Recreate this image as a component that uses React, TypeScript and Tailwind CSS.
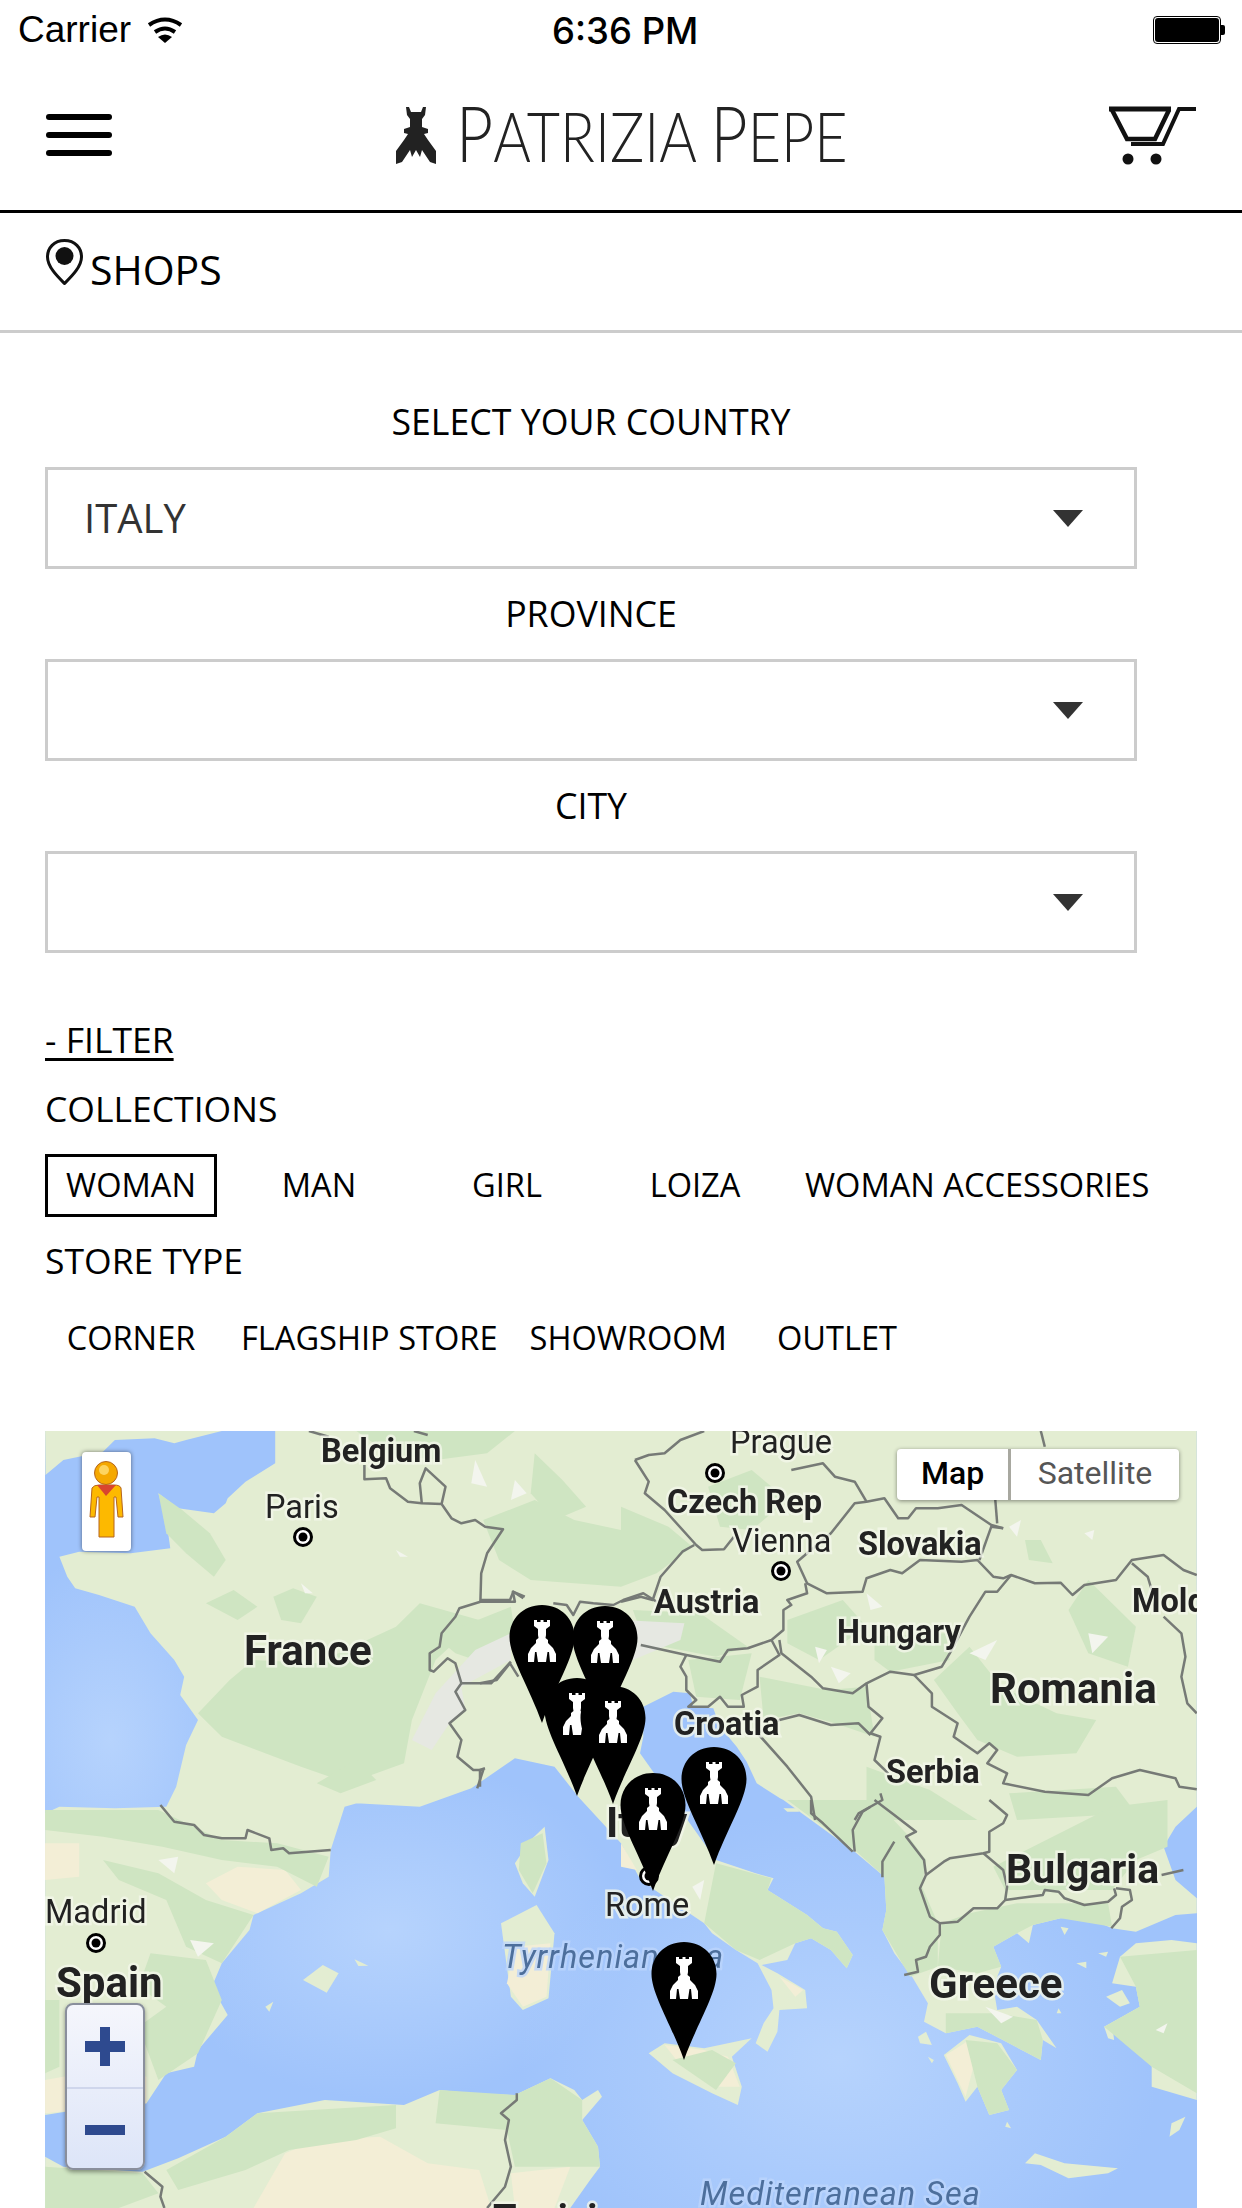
const toPage = (ox: number, oy: number, sx: number, pts: number[]) => {
  const out: string[] = [];
  for (let i = 0; i < pts.length; i += 2) {
    out.push(`${(ox + pts[i] / sx).toFixed(1)},${(oy + pts[i + 1] / 3).toFixed(1)}`);
  }
  return out.join(' ');
};

// traced from crops of the map, each crop has its own origin
const nw = (p: number[]) => toPage(0, 1420, 2.525, p);
const ne = (p: number[]) => toPage(621, 1420, 2.525, p);
const sw = (p: number[]) => toPage(0, 1800, 2.525, p);
const se = (p: number[]) => toPage(621, 1800, 2.525, p);
const alps = (p: number[]) => toPage(480, 1580, 3, p);

const mainland = [
  nw([695,33,695,130,620,185,575,235,570,250,540,280,450,265,400,220,420,300,430,385,330,400,200,395,150,410,170,470,190,505,250,525,340,560,380,640,440,720,465,770,455,825,500,900,470,975,445,1100,420,1160,290,1165,150,1160,114,1180]),
  sw([114,945,165,935,370,910,420,820,490,800,500,750,575,645,535,560,560,490,630,390,640,345,760,280,830,230,835,150,870,20,930,0]),
  nw([900,1150,1060,1160,1190,1105,1300,1015,1400,1040,1460,1130]),
  se([0,130,45,230,85,270,210,370,230,400,290,450,345,490,380,570,385,625,360,670,340,730,370,755,395,695,400,630,470,625,465,570,395,520,355,495,420,480,440,430,480,415,530,450,570,505,585,465,545,395,510,385,470,345,370,270,385,235,340,220,240,180]),
  alps([480,520,490,470,490,380,580,335,630,340,640,380,700,385,720,440,770,500,800,545,830,610,900,655]),
  se([410,0,480,60,590,155,665,230,670,330,660,390,690,460,735,530,775,610,765,665,820,700,900,680,1060,780,1065,720,1100,745,1050,660,1000,620,950,630,940,560,960,500,940,440,1000,400,1030,430,1040,375,1110,355,1170,350,1240,385,1300,395,1400,345,1454,340,1454,295,1400,240,1370,140,1400,80,1454,20]),
  ne([1454,33]),
].join(' ');

const land = [
  nw([114,33,560,33,470,60,440,70,390,55,290,60,260,95,160,120,115,165]),
  sw([114,1070,160,1100,360,1115,450,1075,570,1010,650,940,820,900,1020,915,1110,870,1190,880,1300,885,1390,835,1450,870,1470,900,1510,870,1520,890,1470,960,1510,1040,1515,1100,1490,1140,1440,1224,114,1224]),
  sw([1375,80,1385,180,1350,290,1320,250,1300,190,1340,120]),
  sw([1355,315,1400,400,1385,595,1320,630,1290,590,1265,370]),
  sw([815,495,855,520,825,578,765,540]),
  sw([895,478,930,497,905,498]),
  sw([690,605,680,635,670,620]),
  se([70,760,110,730,210,745,330,715,280,770,305,860,295,915,230,880,130,820]),
  se([880,705,960,730,1000,810,960,870,980,930,930,945,900,860,870,905,850,850,815,765]),
  se([1454,430,1390,420,1300,430,1260,470,1240,550,1300,560,1310,620,1220,680,1340,790,1340,860,1454,900]),
  se([1020,1090,1045,1060,1120,1090,1255,1105,1230,1120,1130,1135,1060,1095]),
  se([750,710,770,695,785,735,755,730]),
  se([775,770,790,780,785,790]),
  se([1220,680,1240,670,1245,720,1230,715]),
  se([1385,1010,1390,970,1425,950,1410,990]),
  se([1225,590,1265,570,1285,610,1260,620]),
  se([1105,625,1112,640,1100,640]),
  se([1150,490,1175,485,1175,505]),
  se([1205,460,1230,455,1225,470]),
  se([975,965,985,985,970,980]),
  se([1110,380,1130,385,1120,405]),
  se([410,25,445,25,450,35,420,35]),
];

const green = [
  nw([400,220,460,270,530,340,570,420,540,470,470,400,420,340]),
  nw([520,550,590,510,650,560,600,600]),
  nw([690,530,740,505,800,530,760,610,710,600]),
  nw([580,780,640,720,800,730,1000,620,1060,550,1210,600,1100,720,1040,900,1020,1030,880,1090,760,1040,560,950,500,880]),
  nw([800,1090,900,1020,950,1080,860,1120]),
  nw([1220,300,1350,240,1450,300,1568,330,1568,500,1340,480,1260,420]),
  nw([1350,100,1420,180,1480,260,1400,300,1340,220]),
  nw([900,33,1300,33,1230,100,1100,120,980,100]),
  nw([1100,650,1290,560,1300,640,1200,720,1150,700]),
  ne([0,260,120,320,180,380,90,460,0,500]),
  ne([220,200,330,150,420,240,330,330,250,320]),
  ne([30,570,200,580,320,680,240,710,60,670]),
  ne([170,720,330,700,300,840,190,830]),
  ne([350,770,520,810,620,800,640,950,540,910,450,880,360,900]),
  ne([640,650,820,640,830,720,680,755,640,720]),
  ne([420,600,560,540,620,620,500,720,420,670]),
  ne([790,780,880,680,960,800,1100,880,1200,900,1150,1000,1000,1010,900,960,850,880]),
  ne([1020,360,1060,360,1090,430,1030,420]),
  ne([980,1120,1250,1100,1300,1180,1000,1200]),
  ne([1180,480,1300,620,1280,740,1180,700,1130,570]),
  ne([620,1040,780,1110,900,1200,620,1200]),
  sw([114,30,400,30,560,120,700,130,830,170,800,260,700,200,560,180,410,140,260,110,114,90]),
  sw([260,180,400,220,520,300,640,345,560,490,470,440,420,300,300,240]),
  sw([380,460,520,480,560,600,500,760,400,840,350,680,420,620,350,560]),
  sw([114,600,150,600,150,800,114,820]),
  sw([1315,130,1370,100,1380,190,1345,280,1310,210]),
  sw([570,1010,650,940,1000,915,1000,985,900,1020,730,1050,620,1110,450,1170,420,1110]),
  sw([1110,870,1300,885,1390,835,1470,900,1470,960,1510,1040,1515,1100,1300,1100,1280,990,1100,970]),
  sw([114,1100,360,1120,400,1180,300,1224,114,1224]),
  se([240,190,380,235,370,270,470,345,510,385,545,395,585,465,570,505,530,450,480,415,440,430,350,480,290,450,210,370]),
  se([420,0,590,150,665,230,670,330,660,390,730,530,800,500,800,370,760,260,770,180,720,100,640,0]),
  se([810,370,880,340,1000,310,1230,310,1240,380,1110,355,1040,375,1000,400,940,440,960,500,900,520,800,500]),
  se([940,200,1240,20,1380,0,1380,140,1300,180,1240,270,970,270]),
  se([870,720,950,730,1000,810,960,870,980,930,930,945,900,860]),
  se([820,640,950,640,1050,660,1065,720,1060,780,900,680,820,700]),
  se([1260,470,1454,450,1454,880,1340,800,1220,680,1310,620,1300,560]),
  se([130,780,230,750,290,790,240,870]),
];

const sand = [
  sw([640,1224,720,1060,800,1020,960,1010,1080,1090,1210,1110,1240,1224]),
  sw([1300,1224,1290,1120,1440,1100,1400,1224]),
  sw([600,200,720,210,760,270,650,340,560,300,520,250]),
  sw([114,840,300,800,370,830,370,910,114,940]),
  sw([114,130,200,130,200,230,114,240]),
  sw([420,640,500,630,510,730,440,760]),
  sw([1300,440,1390,430,1380,590,1320,620,1280,550]),
  se([110,735,210,750,270,770,300,860,230,860,140,780]),
  se([0,130,40,210,0,200]),
  se([255,300,310,320,290,350,260,340]),
  se([820,765,880,720,890,800,870,890]),
  se([470,360,510,385,490,410]),
  se([400,530,460,570,440,590]),
];

const snow = [
  nw([1040,960,1100,820,1200,690,1290,640,1290,720,1165,800,1175,870,1135,910,1090,990]),
  ne([0,600,160,610,150,660,30,720,0,760]),
];

const flecks = [
  ne([1180,640,1230,650,1190,700]),
  ne([880,700,950,660,920,720]),
  ne([490,680,520,690,500,730]),
  ne([620,520,660,560,630,570]),
  ne([530,740,580,760,550,790]),
  ne([980,320,1010,300,1000,350]),
  ne([1170,340,1195,330,1190,360]),
  nw([1200,120,1230,200,1190,190]),
  nw([1300,180,1330,220,1290,240]),
  nw([760,490,790,520,770,520]),
  nw([1000,390,1030,410,1010,410]),
  sw([400,180,450,170,440,220]),
  sw([480,420,540,430,500,470]),
  se([180,260,210,240,200,300]),
  se([920,620,990,650,960,670]),
  se([1350,690,1380,670,1370,700]),
];

const borders = [
  nw([780,33,830,50]),
  nw([1045,33,1080,45]),
  nw([920,135,920,178,975,175,985,205,1030,245,1065,250,1115,252,1140,295,1165,310,1200,300,1225,320,1270,328,1230,400,1215,460,1213,545,1300,545,1295,515,1325,530]),
  nw([1213,545,1160,565,1150,590,1115,640,1110,680,1085,700,1085,750,1095,755,1130,715,1150,730,1165,790,1240,790,1290,725]),
  nw([1165,790,1150,815,1175,870,1135,910,1165,960,1155,1010,1195,1050,1220,1050,1205,1105]),
  nw([1065,250,1060,190,1075,145,1125,200,1115,252]),
  sw([405,15,440,65,490,75,515,105,560,115,620,115,625,90,680,115,685,150,715,145,730,160,835,150]),
  sw([365,1115,410,1160,405,1190,415,1224]),
  sw([1305,880,1305,900,1265,940,1285,960,1275,1020,1290,1100,1275,1160,1240,1210,1230,1224]),
  ne([35,120,70,185,60,220,110,270,190,375,205,390,260,388,285,350]),
  ne([35,120,70,105,110,100,150,60,210,33]),
  ne([430,150,510,130,540,170,590,185,620,245,665,235,700,295,725,295,745,265,800,265,860,255,935,315,965,325]),
  ne([620,245,590,250,530,340,470,400,445,425,470,490,520,520,610,515,620,475,680,450,710,460,755,420,860,425,900,420,940,470,965,475,985,465]),
  ne([965,325,935,320,905,420]),
  ne([1060,33,1070,80]),
  ne([945,240,950,310]),
  ne([0,545,50,530,80,540,100,470,155,395,185,375]),
  ne([465,490,470,520,420,540,430,555,410,570,410,630,380,660,320,685,270,690,250,725,165,705,50,675]),
  ne([165,705,150,740,165,770,165,810,190,840,170,860,220,860,250,830,270,860,310,860,305,825,345,800,345,750,400,705,380,660]),
  ne([400,660,405,700,480,770,510,805,585,820,620,790,680,755,740,765,810,740,830,700,880,590,920,515,950,515,985,465,1045,490,1110,488,1140,525,1170,495,1250,480,1290,420,1370,405,1420,450,1454,465]),
  ne([1290,430,1330,470,1340,510]),
  ne([1370,590,1415,640,1425,710,1415,770,1430,850,1454,880]),
  ne([740,765,785,820,785,860,850,910,840,950,900,1000,930,970,950,990,925,1030,975,1060,965,1090,1070,1115,1180,1125,1240,1075,1310,1050,1400,1075,1410,1100,1454,1108]),
  ne([620,790,625,860,660,895,630,940,655,950,640,1020,675,1060]),
  ne([345,940,400,900,450,885,530,915,600,910,630,945]),
  ne([345,940,420,1040,480,1130,490,1200]),
  ne([655,1120,660,1140,600,1180,590,1200]),
  se([480,0,480,40,510,70,585,155]),
  se([590,155,585,90,610,35,630,20]),
  se([640,0,690,45,745,95,720,110,765,180,770,225,755,265,780,350,805,370,805,405,780,440,770,470,745,480,750,515,715,525]),
  se([930,0,975,45,965,70,930,95,930,155,915,160,830,175,815,185,770,225]),
  se([915,160,965,210,975,260,970,300,950,325,890,325,850,365,805,370]),
  se([970,300,1065,285,1070,270,1105,275,1120,295,1170,315,1230,305,1250,285,1245,265]),
  se([1250,265,1285,270,1290,300,1265,320,1260,355,1238,385]),
  se([1365,225,1420,210]),
  se([690,125,660,185,660,232]),
  alps([0,60,90,60,100,35,130,55]),
  alps([220,70,260,75,280,105,300,65,340,70,400,75,430,60,490,40,530,65]),
  alps([0,310,50,300,90,250,115,290]),
  alps([0,620,0,570,15,565]),
];

const places: { name: string; x: number; y: number; size?: number; bold?: boolean; sea?: boolean; spacing?: number }[] = [
  { name: 'Belgium', x: 321, y: 1462, bold: true },
  { name: 'Paris', x: 265, y: 1518 },
  { name: 'France', x: 244, y: 1665, size: 42, bold: true },
  { name: 'Prague', x: 730, y: 1453 },
  { name: 'Czech Rep', x: 667, y: 1513, bold: true },
  { name: 'Vienna', x: 732, y: 1552 },
  { name: 'Slovakia', x: 858, y: 1555, bold: true },
  { name: 'Austria', x: 654, y: 1613, bold: true },
  { name: 'Hungary', x: 837, y: 1643, bold: true },
  { name: 'Romania', x: 990, y: 1703, size: 42, bold: true },
  { name: 'Croatia', x: 674, y: 1735, bold: true },
  { name: 'Serbia', x: 886, y: 1783, bold: true },
  { name: 'Moldova', x: 1132, y: 1612, bold: true },
  { name: 'Madrid', x: 45, y: 1923 },
  { name: 'Spain', x: 56, y: 1997, size: 42, bold: true },
  { name: 'Italy', x: 606, y: 1837, size: 42, bold: true },
  { name: 'Rome', x: 605, y: 1916 },
  { name: 'Bulgaria', x: 1006, y: 1883, size: 41, bold: true },
  { name: 'Greece', x: 929, y: 1998, size: 42, bold: true },
  { name: 'Tunisia', x: 493, y: 2232, size: 38, bold: true },
  { name: 'Tyrrhenian Sea', x: 502, y: 1968, sea: true, spacing: 1 },
  { name: 'Mediterranean Sea', x: 700, y: 2205, sea: true, spacing: 1 },
];

const cities = [[303, 1537], [715, 1473], [781, 1571], [96, 1943], [649, 1876]];

// head centre x and top of each marker
const markers = [[542, 1605], [605, 1606], [577, 1678], [613, 1686], [714, 1747], [653, 1773], [684, 1942]];

function Marker({ x, y }: { x: number; y: number }) {
  return (
    <g transform={`translate(${x} ${y})`}>
      <path d="M0 0C-19 0 -32.500 14 -32.500 32C-32.500 52 -12 84 0 118C12 84 32.500 52 32.500 32C32.500 14 19 0 0 0Z" fill="#000" />
      <path
        d="M-8 15L-5 15L-5 17L-1.500 17L-1.500 15L1.500 15L1.500 17L5 17L5 15L8 15L8 21L4 24L4 30L3.500 33L6 35L6 38L11 43L14 49L14 57L8 57L7 47L5.500 47L4 57L-4 57L-5.500 47L-7 47L-8 57L-14 57L-14 49L-11 43L-6 38L-6 35L-3.500 33L-4 30L-4 24L-8 21Z"
        fill="#fff"
      />
    </g>
  );
}

function MapDrawing() {
  return (
    <svg viewBox="45 1431 1152 777" className="block w-full h-full blur-[0.6px]">
      <defs>
        <radialGradient id="sea">
          <stop offset="0%" stopColor="#b6d3fd" />
          <stop offset="100%" stopColor="#b6d3fd" stopOpacity="0" />
        </radialGradient>
      </defs>
      <rect x="45" y="1431" width="1152" height="777" fill="#9fc3fb" />
      <ellipse cx="110" cy="1740" rx="130" ry="190" fill="url(#sea)" />
      <ellipse cx="390" cy="1930" rx="240" ry="170" fill="url(#sea)" />
      <ellipse cx="840" cy="2060" rx="320" ry="250" fill="url(#sea)" />
      <polygon points={mainland} fill="#e3edd2" />
      {land.map((p) => (
        <polygon key={p} points={p} fill="#e3edd2" />
      ))}
      {sand.map((p) => (
        <polygon key={p} points={p} fill="#f3eed6" />
      ))}
      {green.map((p) => (
        <polygon key={p} points={p} fill="#cfe5c2" />
      ))}
      {snow.map((p) => (
        <polygon key={p} points={p} fill="#e6e8e2" />
      ))}
      {flecks.map((p) => (
        <polygon key={p} points={p} fill="#f3f5ee" />
      ))}
      {borders.map((p) => (
        <polyline key={p} points={p} fill="none" stroke="#767a76" strokeWidth="2.500" strokeLinejoin="round" />
      ))}
      {places.map((p) => (
        <text
          key={p.name}
          x={p.x}
          y={p.y}
          fontFamily="Roboto, sans-serif"
          fontSize={p.size ?? 32.500}
          fontWeight={p.bold ? 700 : 400}
          fontStyle={p.sea ? 'italic' : 'normal'}
          letterSpacing={p.spacing ?? 0}
          fill={p.sea ? '#4d6f9c' : '#222'}
          stroke={p.sea ? '#bcd5fb' : '#f2f6ea'}
          strokeOpacity="0.8"
          strokeWidth="5"
          paintOrder="stroke"
        >
          {p.name}
        </text>
      ))}
      {cities.map(([x, y]) => (
        <g key={x}>
          <circle cx={x} cy={y} r="8.500" fill="#fff" stroke="#000" strokeWidth="3" />
          <circle cx={x} cy={y} r="4.500" fill="#000" />
        </g>
      ))}
      {markers.map(([x, y]) => (
        <Marker key={x} x={x} y={y} />
      ))}
    </svg>
  );
}

function Pegman() {
  return (
    <svg viewBox="0 0 49 99" className="block w-[49px] h-[99px]">
      <path
        d="M10 36Q12 33 17 33L32 33Q38 33 39 36L41 65L36 65L34 45L32 45L32 85L17 85L17 45L15 45L13 65L8 65Z"
        fill="#fdb900"
        stroke="#b5651d"
        strokeWidth="1"
      />
      <path d="M15 33L34 33L24 44Z" fill="#d9452f" />
      <circle cx="24" cy="21" r="11.500" fill="#f5a800" stroke="#b5651d" strokeWidth="1" />
      <circle cx="22" cy="18" r="5" fill="#fdd460" />
    </svg>
  );
}

function Fly() {
  return (
    <svg viewBox="0 0 40 57" className="block w-[40px] h-[57px]">
      <path
        d="M10 0L13 0L15 5L25 5L27 0L30 0L29 8L26 12L26 20L32 22L32 26L28 27L32 33L40 44L40 57L34 55L26 43L24 50L20 43L16 50L14 43L6 55L0 57L0 44L8 33L12 27L8 26L8 22L14 20L14 12L11 8Z"
        fill="#222"
      />
    </svg>
  );
}

function Cart() {
  return (
    <svg viewBox="0 0 87 60" className="block w-[87px] h-[60px]">
      <path d="M0 4L62 4" fill="none" stroke="#111" strokeWidth="5" />
      <path d="M3 5L18 34L46 34L60 5" fill="none" stroke="#111" strokeWidth="4.500" />
      <path d="M87 4L70 4L54 39L22 39" fill="none" stroke="#111" strokeWidth="4" />
      <circle cx="19" cy="54" r="5.500" fill="#111" />
      <circle cx="47" cy="54" r="5.500" fill="#111" />
    </svg>
  );
}

function Wifi() {
  return (
    <svg viewBox="0 0 38 27" className="block w-[38px] h-[27px]">
      <path d="M3 8Q19 -3 35 8" fill="none" stroke="#000" strokeWidth="4" />
      <path d="M9 15Q19 8 29 15" fill="none" stroke="#000" strokeWidth="4" />
      <path d="M12 20Q19 15 26 20L19 26Z" fill="#000" />
    </svg>
  );
}

function Caret() {
  return <div className="w-0 h-0 border-x-[15px] border-x-transparent border-t-[17px] border-t-[#333]" />;
}

function SelectField({ label, value }: { label: string; value?: string }) {
  return (
    <div>
      <div className="h-[90px] flex items-center justify-center text-[35.7px] leading-none text-black">{label}</div>
      <div className="h-[102px] border-[3px] border-[#ccc] flex items-center justify-between pl-[36px] pr-[51px] text-[40px] text-[#333]">
        <span>{value}</span>
        <Caret />
      </div>
    </div>
  );
}

function Chip({ label, active, wide }: { label: string; active?: boolean; wide?: boolean }) {
  return (
    <div
      className={`h-[63px] flex items-center justify-center text-[32.6px] whitespace-nowrap ${
        wide ? 'px-[8px]' : 'min-w-[172px]'
      } ${active ? 'border-[3px] border-black' : ''}`}
    >
      {label}
    </div>
  );
}

export default function App() {
  return (
    <div className="w-[1242px] h-[2208px] overflow-hidden bg-white text-black font-['Open_Sans',sans-serif]">
      {/* Status bar */}
      <div className="h-[60px] flex items-center justify-between pl-[18px] pr-[17px] relative">
        <div className="flex items-center gap-[15px] font-['Liberation_Sans',sans-serif] text-[37px]">
          <span>Carrier</span>
          <Wifi />
        </div>
        <span className="absolute left-[552px] top-[10px] font-['Inter',sans-serif] font-medium text-[36.500px] leading-[42px]">6:36 PM</span>
        <div className="flex items-center">
          <div className="w-[68px] h-[28px] rounded-[4px] border border-black p-[1px]">
            <div className="w-full h-full rounded-[3px] bg-black" />
          </div>
          <div className="w-[4px] h-[10px] rounded-r-[2px] bg-black" />
        </div>
      </div>

      {/* Header */}
      <div className="h-[153px] border-b-[3px] border-black flex items-center justify-between px-[46px]">
        <div className="w-[87px] flex flex-col gap-[12.5px]">
          <div className="w-[66px] h-[5.5px] rounded-full bg-black" />
          <div className="w-[66px] h-[5.5px] rounded-full bg-black" />
          <div className="w-[66px] h-[5.5px] rounded-full bg-black" />
        </div>
        <div className="flex items-center w-[450px] gap-[20px]">
          <Fly />
          <div className="w-[387px] -mt-[4px] whitespace-nowrap origin-left scale-x-[0.845] font-['Lato',sans-serif] font-light text-[#222] leading-none">
            <span className="text-[76px]">P</span>
            <span className="text-[68px]">ATRIZIA </span>
            <span className="text-[76px]">P</span>
            <span className="text-[68px]">EPE</span>
          </div>
        </div>
        <Cart />
      </div>

      {/* Page title */}
      <div className="h-[120px] border-b-[3px] border-[#ccc] flex items-start pl-[46px] pt-[26px] gap-[7px]">
        <svg viewBox="0 0 37 46" className="block w-[37px] h-[46px]">
          <path d="M18.500 1.500C8 1.500 1.500 9 1.500 18C1.500 28 12 38 18.500 44.500C25 38 35.500 28 35.500 18C35.500 9 29 1.500 18.500 1.500Z" fill="none" stroke="#111" strokeWidth="3" />
          <circle cx="18.500" cy="17" r="9" fill="#111" />
        </svg>
        <span className="text-[41px] leading-none mt-[10px]">SHOPS</span>
      </div>

      <div className="px-[45px] pt-[44px]">
        {/* Location selects */}
        <div className="w-[1092px]">
          <SelectField label="SELECT YOUR COUNTRY" value="ITALY" />
          <SelectField label="PROVINCE" />
          <SelectField label="CITY" />
        </div>

        {/* Filters */}
        <div className="mt-[62px] text-[35.5px] leading-[48px] underline underline-offset-[5px] decoration-[3px]">- FILTER</div>
        <div className="mt-[21px] text-[35.5px] leading-[48px]">COLLECTIONS</div>
        <div className="mt-[22px] flex gap-[16px]">
          <Chip label="WOMAN" active />
          <Chip label="MAN" />
          <Chip label="GIRL" />
          <Chip label="LOIZA" />
          <Chip label="WOMAN ACCESSORIES" wide />
        </div>
        <div className="mt-[19px] text-[35.5px] leading-[48px]">STORE TYPE</div>
        <div className="mt-[23px] flex gap-[16px]">
          <Chip label="CORNER" />
          <Chip label="FLAGSHIP STORE" wide />
          <Chip label="SHOWROOM" wide />
          <Chip label="OUTLET" />
        </div>

        {/* Map */}
        <div className="relative mt-[61px] w-[1152px] h-[777px] overflow-hidden font-['Roboto',sans-serif]">
          <MapDrawing />
          <div className="absolute left-[37px] top-[21px] w-[49px] h-[99px] rounded-[4px] bg-white shadow-[0_0_4px_rgba(0,0,0,0.5)]">
            <Pegman />
          </div>
          <div className="absolute left-[852px] top-[18px] w-[282px] h-[51px] flex rounded-[4px] bg-white shadow-[0_1px_4px_rgba(0,0,0,0.45)] text-[32px] leading-[48px]">
            <div className="w-[114px] border-r-[3px] border-[#a8a8a0] text-center font-medium text-black">Map</div>
            <div className="flex-1 text-center text-[#565656]">Satellite</div>
          </div>
          <div className="absolute left-[20px] top-[572px] w-[80px] h-[167px] rounded-[8px] border-2 border-[#8a8f9c] shadow-[0_2px_4px_rgba(0,0,0,0.4)] overflow-hidden bg-gradient-to-b from-[#f5f6fc] to-[#dde5f8]">
            <div className="h-[84px] border-b-2 border-[#cfd6ec] flex items-center justify-center">
              <div className="relative w-[40px] h-[39px]">
                <div className="absolute left-0 top-[14px] w-[40px] h-[11px] bg-[#2e4a8f]" />
                <div className="absolute left-[15px] top-0 w-[10px] h-[39px] bg-[#2e4a8f]" />
              </div>
            </div>
            <div className="h-[81px] flex items-center justify-center">
              <div className="w-[40px] h-[10px] bg-[#2e4a8f]" />
            </div>
          </div>
        </div>
      </div>
    </div>
  );
}
